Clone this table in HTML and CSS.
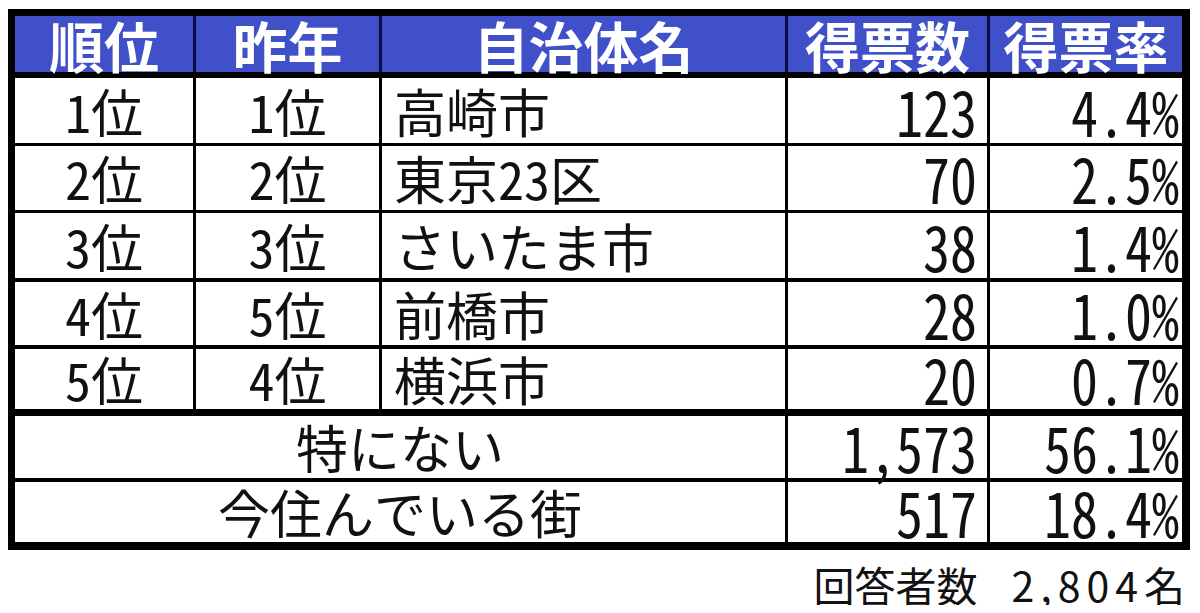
FILE: index.html
```html
<!DOCTYPE html>
<html lang="ja">
<head>
<meta charset="utf-8">
<title>住みたい街ランキング</title>
<link rel="stylesheet" href="styles.css">
</head>
<body>
<div class="table">
  <div class="row head">
    <div class="cell center">順位</div>
    <div class="cell center">昨年</div>
    <div class="cell center">自治体名</div>
    <div class="cell center">得票数</div>
    <div class="cell center">得票率</div>
  </div>
  <div class="row r1">
    <div class="cell center">1位</div>
    <div class="cell center">1位</div>
    <div class="cell name">高崎市</div>
    <div class="cell num"><span class="fig">123</span></div>
    <div class="cell pct"><span class="fig">4.4%</span></div>
  </div>
  <div class="row r2">
    <div class="cell center">2位</div>
    <div class="cell center">2位</div>
    <div class="cell name">東京23区</div>
    <div class="cell num"><span class="fig">70</span></div>
    <div class="cell pct"><span class="fig">2.5%</span></div>
  </div>
  <div class="row r3">
    <div class="cell center">3位</div>
    <div class="cell center">3位</div>
    <div class="cell name">さいたま市</div>
    <div class="cell num"><span class="fig">38</span></div>
    <div class="cell pct"><span class="fig">1.4%</span></div>
  </div>
  <div class="row r4">
    <div class="cell center">4位</div>
    <div class="cell center">5位</div>
    <div class="cell name">前橋市</div>
    <div class="cell num"><span class="fig">28</span></div>
    <div class="cell pct"><span class="fig">1.0%</span></div>
  </div>
  <div class="row r5">
    <div class="cell center">5位</div>
    <div class="cell center">4位</div>
    <div class="cell name">横浜市</div>
    <div class="cell num"><span class="fig">20</span></div>
    <div class="cell pct"><span class="fig">0.7%</span></div>
  </div>
  <div class="row r6">
    <div class="cell center span3">特にない</div>
    <div class="cell num"><span class="fig">1,573</span></div>
    <div class="cell pct"><span class="fig">56.1%</span></div>
  </div>
  <div class="row r7">
    <div class="cell center span3">今住んでいる街</div>
    <div class="cell num"><span class="fig">517</span></div>
    <div class="cell pct"><span class="fig">18.4%</span></div>
  </div>
</div>
<div class="footer">回答者数<span class="count">2,804</span>名</div>
</body>
</html>
```
FILE: styles.css
```css
html, body {
  background: #ffffff;
}

body {
  margin: 9px 8px 0 8px;
  font-family: "Noto Sans Mono CJK JP", "Noto Sans CJK JP", sans-serif;
  color: #111111;
}

.table {
  width: 1182px;
  box-sizing: border-box;
  border-style: solid;
  border-color: #000000;
  border-width: 7px 8px 8px 7px;
}

.row {
  display: grid;
  grid-template-columns: 181px 186px 406px 202px 192px;
  box-sizing: border-box;
  border-bottom: 3px solid #000000;
  font-size: 52px;
  line-height: 1;
}

.cell {
  box-sizing: border-box;
  border-right: 3px solid #000000;
  display: flex;
  align-items: center;
  white-space: nowrap;
}

.cell:last-child {
  border-right: none;
}

.center {
  justify-content: center;
}

.name {
  padding-left: 12px;
}

.num {
  justify-content: flex-end;
  padding-right: 10px;
}

.pct {
  justify-content: flex-end;
  padding-right: 3px;
}

.fig {
  display: inline-block;
  font-size: 54px;
  transform: scaleY(1.16);
  transform-origin: 50% 60%;
}

.span3 {
  grid-column: span 3;
}

.head {
  height: 62px;
  border-bottom-width: 6px;
  background: #4050c8;
  color: #ffffff;
  font-family: "Noto Sans CJK JP", sans-serif;
  font-weight: 700;
  font-size: 55px;
}

.head .cell {
  border-right-color: #0d0d45;
}

.r1 { height: 68px; }
.r2 { height: 67px; }
.r3 { height: 69px; border-bottom-width: 4px; }
.r4 { height: 67px; border-bottom-width: 4px; }
.r5 { height: 67px; border-bottom-width: 7px; }
.r6 { height: 66px; border-bottom-width: 4px; }
.r7 { height: 60px; border-bottom: none; }

.footer {
  margin-top: 14px;
  padding-right: 7px;
  text-align: right;
  font-family: "Noto Sans CJK JP", sans-serif;
  font-size: 41px;
  line-height: 1;
}

.count {
  margin-left: 34px;
  letter-spacing: 6px;
}
```
